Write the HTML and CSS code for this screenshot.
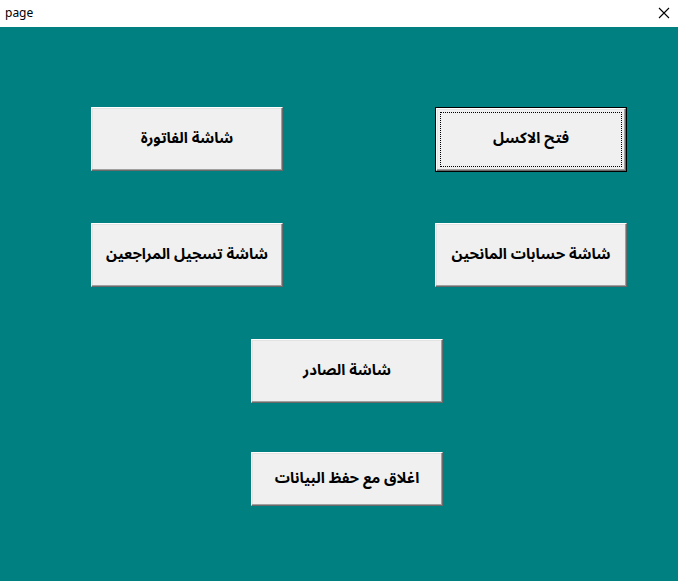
FILE: index.html
```html
<!DOCTYPE html>
<html lang="ar">
<head>
<meta charset="utf-8">
<title>page</title>
<link rel="stylesheet" href="styles.css">
</head>
<body>
<div class="titlebar">
  <span class="title" dir="ltr">page</span>
  <svg class="close" width="12" height="12" viewBox="0 0 12 12"><path d="M1 1 L11 11 M11 1 L1 11" stroke="#000" stroke-width="1.1" fill="none"/></svg>
</div>
<main class="form">
  <div class="row split">
    <button class="btn">شاشة الفاتورة</button>
    <button class="btn default">فتح الاكسل</button>
  </div>
  <div class="row split">
    <button class="btn">شاشة تسجيل المراجعين</button>
    <button class="btn">شاشة حسابات المانحين</button>
  </div>
  <div class="row center">
    <button class="btn">شاشة الصادر</button>
  </div>
  <div class="row center">
    <button class="btn short">اغلاق مع حفظ البيانات</button>
  </div>
</main>
</body>
</html>
```
FILE: styles.css
```css
html, body {
  margin: 0;
  padding: 0;
}
body {
  width: 678px;
  height: 581px;
  background: #008080;
  overflow: hidden;
  font-family: "DejaVu Sans", "Noto Sans", sans-serif;
}
.titlebar {
  height: 27px;
  background: #ffffff;
  display: flex;
  align-items: center;
  justify-content: space-between;
  padding: 0 8px 0 5px;
  box-sizing: border-box;
}
.title {
  font-family: "Noto Sans", "Open Sans", sans-serif;
  font-size: 12px;
  color: #000;
  margin-top: -3px;
}
.close {
  margin-top: -2px;
}
.form {
  display: flex;
  flex-direction: column;
  gap: 52px;
  padding: 80px 0 0 91px;
  width: 536px;
}
.row {
  display: flex;
}
.row.split {
  justify-content: space-between;
}
.row.center {
  padding-left: 160px;
}
.btn {
  position: relative;
  box-sizing: border-box;
  width: 192px;
  height: 64px;
  background: #f0f0f0;
  border: 1px solid;
  border-color: #ffffff #696969 #696969 #ffffff;
  box-shadow: inset -1px -1px 0 #a0a0a0, inset 1px 1px 0 #e3e3e3;
  font-family: "Noto Sans Arabic", "Noto Naskh Arabic", "DejaVu Sans", sans-serif;
  font-weight: bold;
  font-size: 15px;
  color: #000;
  padding: 0 0 3px 0;
  direction: rtl;
}
.btn.default {
  width: 190px;
  height: 63px;
  margin-right: 1px;
  margin-top: 1px;
  box-shadow: 0 0 0 1px #000, inset -1px -1px 0 #a0a0a0, inset 1px 1px 0 #e3e3e3;
}
.btn.default::after {
  content: "";
  position: absolute;
  left: 3px;
  top: 3px;
  right: 3px;
  bottom: 3px;
  border: 1px dotted #000;
}
.btn.short {
  height: 54px;
  margin-top: -3px;
}
```
